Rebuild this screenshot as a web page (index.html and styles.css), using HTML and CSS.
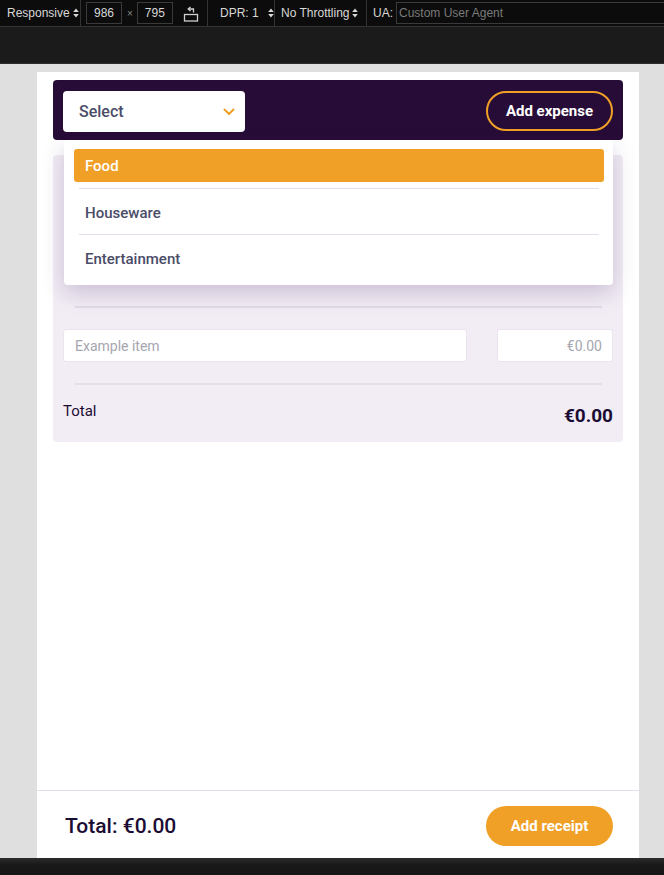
FILE: index.html
```html
<!DOCTYPE html>
<html>
<head>
<meta charset="utf-8">
<link rel="stylesheet" href="styles.css">
</head>
<body>
<div class="devbar">
  <div class="seg seg-resp">Responsive <svg class="updown" width="6" height="10" viewBox="0 0 6 10"><path d="M3 0.5 L5.8 4 H0.2 Z M3 9.5 L5.8 6 H0.2 Z" fill="#d8d8d8"/></svg></div>
  <div class="seg seg-dims">
    <span class="box">986</span><span class="times">×</span><span class="box">795</span>
    <svg class="rotate" width="16" height="20" viewBox="0 0 16 20"><rect x="1.5" y="12.5" width="13" height="6.5" fill="none" stroke="#cfcfcf" stroke-width="1.3"/><path d="M10.5 10.5 V7 H5.5" fill="none" stroke="#cfcfcf" stroke-width="1.3"/><path d="M7.5 5 L5.2 7 L7.5 9" fill="none" stroke="#cfcfcf" stroke-width="1.3"/></svg>
  </div>
  <div class="seg seg-dpr">DPR: 1 <svg class="updown" width="6" height="10" viewBox="0 0 6 10"><path d="M3 0.5 L5.8 4 H0.2 Z M3 9.5 L5.8 6 H0.2 Z" fill="#d8d8d8"/></svg></div>
  <div class="seg seg-thr">No Throttling <svg class="updown" width="6" height="10" viewBox="0 0 6 10"><path d="M3 0.5 L5.8 4 H0.2 Z M3 9.5 L5.8 6 H0.2 Z" fill="#d8d8d8"/></svg></div>
  <div class="seg seg-ua">UA: <span class="ua-input">Custom User Agent</span></div>
</div>
<div class="darkstrip"></div>
<div class="stage">
  <div class="page">
    <div class="main">
      <div class="header">
        <div class="select">
          <span>Select</span>
          <svg width="12" height="8" viewBox="0 0 12 8"><path d="M1.5 1.5 L6 6 L10.5 1.5" fill="none" stroke="#f0a026" stroke-width="2" stroke-linecap="round" stroke-linejoin="round"/></svg>
        </div>
        <button class="btn-outline">Add expense</button>
      </div>
      <div class="card">
        <div class="dropdown">
          <div class="opt opt-active">Food</div>
          <div class="opt-sep"></div>
          <div class="opt">Houseware</div>
          <div class="opt-sep"></div>
          <div class="opt">Entertainment</div>
        </div>
        <div class="card-top"></div>
        <div class="rule"></div>
        <div class="item-row">
          <div class="input input-name">Example item</div>
          <div class="input input-price">€0.00</div>
        </div>
        <div class="rule"></div>
        <div class="total-row">
          <span class="total-label">Total</span>
          <span class="total-value">€0.00</span>
        </div>
      </div>
    </div>
    <div class="footer">
      <span class="footer-total">Total: €0.00</span>
      <button class="btn-fill">Add receipt</button>
    </div>
  </div>
</div>
<div class="bottombar"></div>
</body>
</html>
```
FILE: styles.css
```css
* { box-sizing: border-box; }
html, body { margin: 0; padding: 0; }
body {
  width: 664px;
  height: 875px;
  overflow: hidden;
  background: #dfdfdf;
  font-family: "Roboto", "Liberation Sans", sans-serif;
}
.devbar {
  height: 27px;
  background: #0c0c0c;
  border-bottom: 1px solid #333;
  display: flex;
  align-items: stretch;
  color: #d8d8d8;
  font-size: 12px;
  font-family: "Liberation Sans", "Noto Sans", sans-serif;
}
.seg {
  display: flex;
  align-items: center;
  flex-shrink: 0;
  border-right: 1px solid #333;
  padding: 0;
  white-space: nowrap;
  overflow: hidden;
}
.seg-resp { width: 81px; padding-left: 7px; }
.seg-dims { width: 127px; padding-left: 5px; }
.seg-dpr { width: 67px; padding-left: 12px; }
.seg-thr { width: 92px; padding-left: 6px; }
.seg-ua { border-right: none; padding-left: 6px; flex: 1; }
.updown { margin-left: 3px; flex-shrink: 0; }
.seg-dpr .updown { margin-left: 9px; }
.box {
  display: inline-block;
  flex-shrink: 0;
  width: 36px;
  border: 1px solid #3a3a3a;
  height: 22px;
  line-height: 20px;
  padding: 0 7px;
  color: #d8d8d8;
}
.times { color: #888; font-size: 10px; margin: 0 4px 0 5px; }
.rotate { margin-left: 10px; margin-top: -2px; flex-shrink: 0; }
.ua-input {
  margin-left: 3px;
  flex: 1;
  height: 22px;
  line-height: 20px;
  border: 1px solid #3a3a3a;
  border-right: none;
  padding-left: 2px;
  color: #7a7a7a;
}
.darkstrip {
  height: 37px;
  background: #1b1b1c;
  border-bottom: 1px solid #2e2e2e;
}
.stage {
  height: 794px;
  padding: 8px 25px 0 37px;
}
.page {
  width: 602px;
  height: 786px;
  background: #fff;
  display: flex;
  flex-direction: column;
}
.main {
  flex: 1;
  padding: 8px 16px 0;
}
.header {
  height: 60px;
  background: #270c37;
  border-radius: 4px;
  display: flex;
  align-items: flex-start;
  justify-content: space-between;
  padding: 11px 10px 0 10px;
}
.select {
  width: 182px;
  height: 41px;
  background: #fff;
  border-radius: 4px;
  display: flex;
  align-items: center;
  justify-content: space-between;
  padding: 0 10px 0 16px;
  color: #4a4c68;
  font-size: 16px;
  font-weight: 500;
}
.select svg { margin-top: 1px; }
.btn-outline {
  width: 127px;
  height: 40px;
  border: 2px solid #f0a026;
  border-radius: 20px;
  background: transparent;
  color: #fff;
  font-family: inherit;
  font-size: 15px;
  font-weight: 700;
  padding: 0;
}
.card {
  position: relative;
  margin-top: 15px;
  height: 287px;
  background: #f2edf5;
  border-radius: 4px;
  padding: 0 10px;
}
.dropdown {
  position: absolute;
  left: 11px;
  top: -15px;
  width: 549px;
  height: 145px;
  background: #fff;
  border-radius: 4px;
  box-shadow: 0 8px 22px rgba(70, 30, 100, 0.22);
  padding: 9px 9px 0 10px;
  z-index: 2;
}
.opt {
  height: 45px;
  display: flex;
  align-items: center;
  padding: 2px 0 0 11px;
  color: #4a4c68;
  font-size: 15px;
  font-weight: 500;
  border-radius: 3px;
}
.opt-active {
  height: 33px;
  padding-top: 0;
  margin-bottom: 6px;
  background: #f0a026;
  color: #fff;
}
.opt-sep {
  height: 1px;
  background: #e6dcec;
  margin: 0 5px;
}
.card-top { height: 151px; }
.rule {
  height: 2px;
  background: #e4dce9;
  margin: 0 11px 0 12px;
}
.item-row {
  display: flex;
  justify-content: space-between;
  padding: 21px 0;
}
.input {
  height: 33px;
  background: #fff;
  border: 1px solid #ebe4ef;
  border-radius: 3px;
  display: flex;
  align-items: center;
  color: #a6a6b0;
  font-size: 14px;
}
.input-name { width: 404px; padding-left: 11px; }
.input-price { width: 116px; justify-content: flex-end; padding-right: 10px; }
.total-row {
  display: flex;
  justify-content: space-between;
  align-items: flex-start;
  padding-top: 17px;
  color: #1b0c33;
}
.total-label { font-size: 15px; font-weight: 400; }
.total-value { font-size: 19px; font-weight: 700; margin-top: 2px; }
.footer {
  height: 68px;
  border-top: 1px solid #e2def0;
  display: flex;
  align-items: center;
  justify-content: space-between;
  padding: 2px 26px 0 28px;
}
.footer-total {
  font-size: 21px;
  font-weight: 500;
  color: #1b0c33;
}
.btn-fill {
  width: 127px;
  height: 40px;
  border: none;
  border-radius: 20px;
  background: #f0a026;
  color: #fff;
  font-family: inherit;
  font-size: 15px;
  font-weight: 700;
  padding: 0;
}
.bottombar {
  height: 17px;
  background: linear-gradient(#2c2c2c, #191919 40%, #161616);
}
```
